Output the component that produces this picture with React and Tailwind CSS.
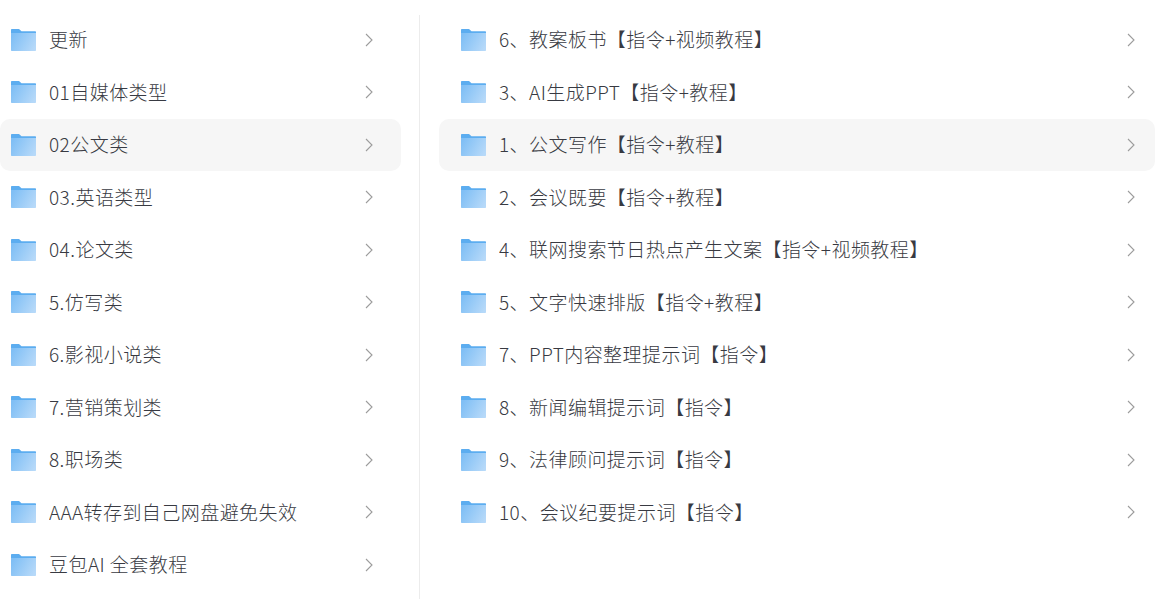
const left = ["更新","01自媒体类型","02公文类","03.英语类型","04.论文类","5.仿写类","6.影视小说类","7.营销策划类","8.职场类","AAA转存到自己网盘避免失效","豆包AI 全套教程"];
const right = ["6、教案板书【指令+视频教程】","3、AI生成PPT【指令+教程】","1、公文写作【指令+教程】","2、会议既要【指令+教程】","4、联网搜索节日热点产生文案【指令+视频教程】","5、文字快速排版【指令+教程】","7、PPT内容整理提示词【指令】","8、新闻编辑提示词【指令】","9、法律顾问提示词【指令】","10、会议纪要提示词【指令】"];

function Folder({ id }) {
  return (
    <svg width="25" height="22" viewBox="0 0 25 22" className="shrink-0">
      <defs>
        <linearGradient id={id} x1="0" y1="0.3" x2="1" y2="0.7">
          <stop offset="0" stopColor="#80bff5" />
          <stop offset="1" stopColor="#b6d9f9" />
        </linearGradient>
      </defs>
      <path d="M0 1C0 .4.4 0 1 0H8L10.5 2.2H24C24.6 2.2 25 2.6 25 3.2V6H0Z" fill="#5cadf0" />
      <path d="M0 4H25V21C25 21.6 24.6 22 24 22H1C.4 22 0 21.6 0 21Z" fill={`url(#${id})`} />
    </svg>
  );
}

function Row({ text, active, id, pad }) {
  return (
    <div className={`flex h-[52.5px] items-center rounded-[10px] ${pad} ${active ? "bg-[#f6f6f6]" : ""}`}>
      <Folder id={id} />
      <span className="ml-[13px] flex-1 -translate-y-px truncate text-[19px] leading-[27px] font-light tracking-[0.45px] text-[#383a42]">{text}</span>
      <svg width="8" height="14" viewBox="0 0 8 14" className="shrink-0">
        <path d="M1 1 7 7 1 13" fill="none" stroke="#9c9c9c" strokeWidth="1.1" />
      </svg>
    </div>
  );
}

export default function App() {
  return (
    <div className="flex h-[599px] w-[1155px] overflow-hidden bg-white font-['Noto_Sans_CJK_SC','Noto_Sans',sans-serif]">
      <div className="w-[401px] shrink-0 pt-[13.5px]">
        {left.map((t, i) => <Row key={t} text={t} id={`l${i}`} active={i === 2} pad="pl-[11px] pr-[28px]" />)}
      </div>
      <div className="ml-[18px] mt-[15px] w-px shrink-0 bg-[#ececec]" />
      <div className="ml-[19px] flex-1 pt-[13.5px]">
        {right.map((t, i) => <Row key={t} text={t} id={`r${i}`} active={i === 2} pad="pl-[22px] pr-[20px]" />)}
      </div>
    </div>
  );
}
